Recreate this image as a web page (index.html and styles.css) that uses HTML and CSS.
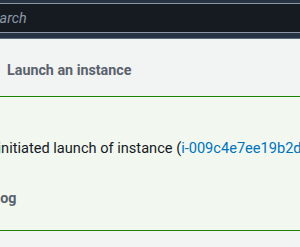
FILE: index.html
```html
<!DOCTYPE html>
<html lang="en">
<head>
    <meta charset="UTF-8">
    <title>Launch an instance</title>
    <link rel="stylesheet" href="styles.css">
</head>
<body>
    <header class="topnav">
        <div class="search">
            <span class="search-text">Search</span>
        </div>
    </header>

    <main class="page">
        <h1 class="breadcrumb">Launch an instance</h1>

        <div class="flash">
            <p class="flash-msg">Successfully initiated launch of instance (<a href="#">i-009c4e7ee19b2d3f1</a>)</p>
            <h2 class="flash-title">Launch log</h2>
        </div>
    </main>
</body>
</html>
```

FILE: styles.css
```css
:root {
    --squid-ink: #273343;
    --nav-dark: #161b22;
    --nav-line: #8a98a6;
    --page-bg: #f2f3f3;
    --flash-bg: #f2f8f0;
    --green: #1d8102;
    --text: #16191f;
    --muted: #5a626c;
    --link: #0073bb;
}

* {
    margin: 0;
    padding: 0;
    box-sizing: border-box;
}

body {
    font-family: Roboto, 'Liberation Sans', Arial, sans-serif;
    background-color: var(--page-bg);
    color: var(--text);
    width: 300px;
    height: 247px;
    overflow: hidden;
}

.topnav {
    background-color: var(--squid-ink);
    padding: 3px 0 5px;
    border-bottom: 1px solid #5f6b7a;
}

.search {
    height: 30px;
    background-color: var(--nav-dark);
    border-top: 1px solid var(--nav-line);
    border-bottom: 1px solid var(--nav-line);
    display: flex;
    align-items: center;
    overflow: hidden;
}

.search-text {
    font-style: italic;
    font-size: 14.3px;
    color: #8d99a8;
    margin-left: -16px;
    white-space: nowrap;
}

.page {
    padding-top: 23px;
}

.breadcrumb {
    font-size: 14.3px;
    font-weight: 700;
    color: var(--muted);
    padding-left: 7px;
    line-height: 16px;
}

.flash {
    margin: 18px -20px 0 -100px;
    height: 135px;
    background-color: var(--flash-bg);
    border-top: 1px solid var(--green);
    border-bottom: 1px solid var(--green);
    padding: 41px 0 0 12px;
    white-space: nowrap;
}

.flash-msg {
    font-size: 14.6px;
    line-height: 20px;
}

.flash-msg a {
    color: var(--link);
    text-decoration: none;
}

.flash-title {
    font-size: 14.3px;
    font-weight: 700;
    color: var(--muted);
    line-height: 20px;
    margin-top: 30px;
    margin-left: 34px;
}
```
